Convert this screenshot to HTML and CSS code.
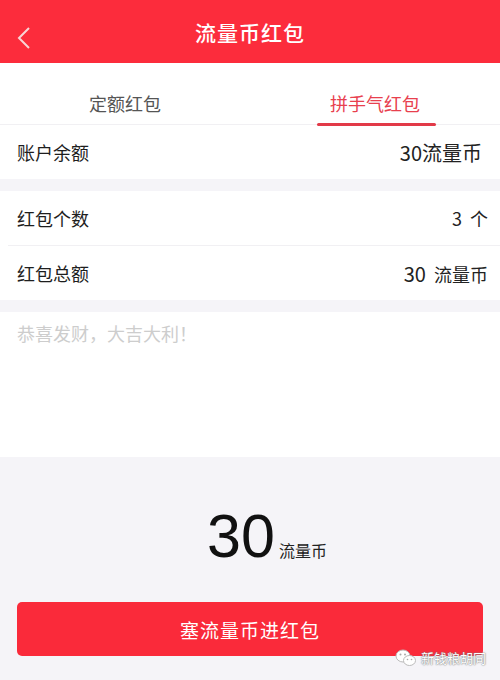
FILE: index.html
```html
<!DOCTYPE html>
<html lang="zh-CN">
<head>
    <meta charset="UTF-8">
    <meta name="viewport" content="width=device-width, initial-scale=1.0">
    <title>流量币红包</title>
    <link rel="stylesheet" href="styles.css">
</head>
<body>
    <div class="page">
        <header class="top-bar">
            <svg class="back" width="14" height="24" viewBox="0 0 14 24">
                <path d="M12 2 L2 12 L12 22" fill="none" stroke="#f8d4d6" stroke-width="2"/>
            </svg>
            <h1>流量币红包</h1>
        </header>

        <nav class="tabs">
            <div class="tab">定额红包</div>
            <div class="tab active">拼手气红包</div>
        </nav>

        <div class="group">
            <div class="row">
                <span>账户余额</span>
                <span class="value big">30流量币</span>
            </div>
        </div>

        <div class="group">
            <div class="row wide">
                <span>红包个数</span>
                <span class="value">3&nbsp;&nbsp;个</span>
            </div>
            <div class="row wide">
                <span>红包总额</span>
                <span class="value"><span class="digits">30</span>&nbsp;&nbsp;流量币</span>
            </div>
        </div>

        <div class="message">
            <textarea placeholder="恭喜发财，大吉大利！"></textarea>
        </div>

        <div class="total">
            <span class="num">30</span>
            <span class="unit">流量币</span>
        </div>

        <button class="send" type="button">塞流量币进红包</button>

        <div class="mark">
            <svg width="22" height="18" viewBox="0 0 22 18">
                <ellipse cx="8" cy="7" rx="7" ry="6" fill="#fff" stroke="#bbb" stroke-width="1"/>
                <ellipse cx="14.5" cy="11.5" rx="6" ry="5" fill="#fff" stroke="#bbb" stroke-width="1"/>
                <circle cx="5.5" cy="5.5" r="1" fill="#aaa"/>
                <circle cx="10" cy="5.5" r="1" fill="#aaa"/>
                <circle cx="12.5" cy="10.5" r="0.8" fill="#aaa"/>
                <circle cx="16.5" cy="10.5" r="0.8" fill="#aaa"/>
            </svg>
            <span>新钱粮胡同</span>
        </div>
    </div>
</body>
</html>
```

FILE: styles.css
```css
body {
    margin: 0;
    background-color: #f5f4f8;
    font-family: "Noto Sans CJK SC", "Noto Sans", sans-serif;
    color: #222;
}
.page {
    position: relative;
    width: 500px;
    height: 680px;
    overflow: hidden;
}
.top-bar {
    height: 63px;
    background-color: #fc2c3c;
    display: flex;
    align-items: center;
    justify-content: center;
    position: relative;
}
.back {
    position: absolute;
    left: 17px;
    top: 26px;
}
.top-bar h1 {
    margin: 0;
    color: #fff;
    font-size: 21px;
    font-weight: 500;
    letter-spacing: 1px;
}
.tabs {
    display: flex;
    height: 61px;
    background-color: #fff;
    border-bottom: 1px solid #f1f0f3;
}
.tab {
    flex: 1;
    display: flex;
    justify-content: center;
    align-items: flex-end;
    padding-bottom: 8px;
    font-size: 18px;
    color: #555;
}
.tab.active {
    color: #e8404e;
    position: relative;
}
.tab.active::after {
    content: "";
    position: absolute;
    left: 67px;
    width: 119px;
    bottom: -2px;
    height: 3px;
    border-radius: 2px;
    background-color: #e23a48;
}
.group {
    background-color: #fff;
    margin-bottom: 12px;
}
.row {
    height: 54px;
    margin-left: 8px;
    padding: 0 18px 0 9px;
    display: flex;
    justify-content: space-between;
    align-items: center;
    font-size: 18px;
    color: #1e1e1e;
    border-bottom: 1px solid #f1f0f3;
}
.row:last-child {
    border-bottom: none;
}
.row.wide {
    padding-right: 12px;
}
.value {
    font-size: 18px;
    color: #222;
}
.value.big {
    font-size: 20px;
}
.digits {
    font-size: 20px;
}
.message {
    background-color: #fff;
    height: 145px;
}
textarea {
    display: block;
    box-sizing: border-box;
    width: 100%;
    height: 100%;
    border: none;
    resize: none;
    outline: none;
    padding: 8px 17px;
    font-family: "Noto Sans CJK SC", sans-serif;
    font-size: 18px;
    background: transparent;
}
textarea::placeholder {
    color: #cdcdcd;
}
.total {
    display: flex;
    justify-content: center;
    align-items: baseline;
    margin-top: 42px;
    padding-left: 34px;
}
.num {
    font-family: "Liberation Sans", sans-serif;
    font-size: 61px;
    line-height: 74px;
    color: #111;
}
.unit {
    font-size: 16px;
    margin-left: 4px;
    color: #222;
}
.send {
    display: block;
    margin: 29px 17px 0;
    width: 466px;
    height: 54px;
    border: none;
    border-radius: 5px;
    background-color: #fa2a3a;
    color: #fff;
    font-family: "Noto Sans CJK SC", sans-serif;
    font-size: 19px;
    letter-spacing: 1px;
}
.mark {
    position: absolute;
    right: 14px;
    bottom: 13px;
    display: flex;
    align-items: center;
    gap: 4px;
    color: #fff;
    font-size: 13px;
    text-shadow: 0 0 2px #888, 0 0 1px #666;
}
```
